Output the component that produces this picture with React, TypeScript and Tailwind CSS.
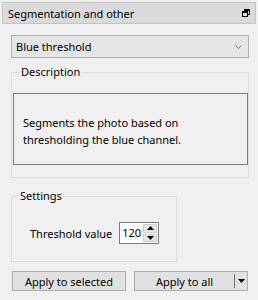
import { useState } from 'react';

const font = { fontFamily: '"Noto Sans", "Open Sans", sans-serif' };

function RestoreIcon() {
  return (
    <svg width="8" height="8" viewBox="0 0 8 8" className="text-black">
      <path d="M2.5 2V0.5h5v5H6" fill="none" stroke="currentColor" strokeWidth="1" />
      <rect x="0.5" y="2.5" width="5" height="5" fill="none" stroke="currentColor" strokeWidth="1" />
      <path d="M0.5 3.5h5M2.5 1.5h5" stroke="currentColor" strokeWidth="1" />
    </svg>
  );
}

function GroupBox({ label, className, children }: { label: string; className?: string; children: React.ReactNode }) {
  return (
    <fieldset className={`border border-[#dcdcdc] ${className ?? ''}`}>
      <legend className="ml-[7px] px-[1px] leading-[16px] text-[11px]">{label}</legend>
      {children}
    </fieldset>
  );
}

export default function App() {
  const [value, setValue] = useState(120);

  return (
    <div className="w-[258px] h-[300px] bg-[#f0f0f0] pt-[2px] text-black overflow-hidden" style={font}>
      <div className="mx-[2px] h-[22px] border border-[#c3c3c3] bg-[#dadada] flex items-center justify-between pl-[5px] pr-[5px]">
        <span className="text-[11px] leading-none">Segmentation and other</span>
        <RestoreIcon />
      </div>

      <div className="pl-[11px] pr-[9px]">
        <button className="mt-[11px] w-full h-[23px] border border-[#adadad] bg-[#e5e5e5] flex items-center justify-between pl-[4px] pr-[6px]">
          <span className="text-[11px] leading-none">Blue threshold</span>
          <svg width="7" height="4" viewBox="0 0 7 4">
            <path d="M0.5 0.5l3 3 3-3" fill="none" stroke="#707070" strokeWidth="1" />
          </svg>
        </button>

        <GroupBox label="Description" className="mt-[6px] h-[114px] pl-[1px] pr-0">
          <div className="mt-[13px] h-[72px] border border-[#7d7d7d] pl-[9px] pt-[20px] text-[11px] leading-[17px]">
            Segments the photo based on
            <br />
            thresholding the blue channel.
          </div>
        </GroupBox>

        <GroupBox label="Settings" className="mt-[10px] w-[166px] h-[74px]">
          <div className="mt-[18px] flex items-center pl-[18px]">
            <span className="text-[11px] leading-none">Threshold value</span>
            <div className="ml-[7px] w-[40px] h-[22px] border border-[#7a7a7a] bg-white flex items-stretch">
              <span className="pl-[2px] flex-1 text-[11px] leading-[20px]">{value}</span>
              <div className="w-[14px] flex flex-col my-[1px] mr-[1px] gap-[1px]">
                <button
                  onClick={() => setValue(value + 1)}
                  className="flex-1 bg-[#e5e5e5] border border-[#cfcfcf] flex items-center justify-center"
                >
                  <svg width="7" height="4" viewBox="0 0 7 4"><path d="M3.5 0L7 4H0z" fill="#000" /></svg>
                </button>
                <button
                  onClick={() => setValue(value - 1)}
                  className="flex-1 bg-[#e5e5e5] border border-[#cfcfcf] flex items-center justify-center"
                >
                  <svg width="7" height="4" viewBox="0 0 7 4"><path d="M0 0h7L3.5 4z" fill="#000" /></svg>
                </button>
              </div>
            </div>
          </div>
        </GroupBox>

        <div className="mt-[9px] flex gap-[8px] pl-[1px] pr-[1px]">
          <button className="w-[114px] h-[20px] border border-[#adadad] bg-[#e1e1e1] text-[11px] leading-none">
            Apply to selected
          </button>
          <div className="w-[114px] h-[20px] border border-[#adadad] bg-[#e1e1e1] flex items-center">
            <button className="flex-1 h-full text-[11px] leading-none">Apply to all</button>
            <div className="w-[1px] h-[14px] bg-[#6d6d6d]" />
            <button className="w-[12px] h-full flex items-center justify-center">
              <svg width="7" height="4" viewBox="0 0 7 4"><path d="M0 0h7L3.5 4z" fill="#000" /></svg>
            </button>
          </div>
        </div>
      </div>
    </div>
  );
}
